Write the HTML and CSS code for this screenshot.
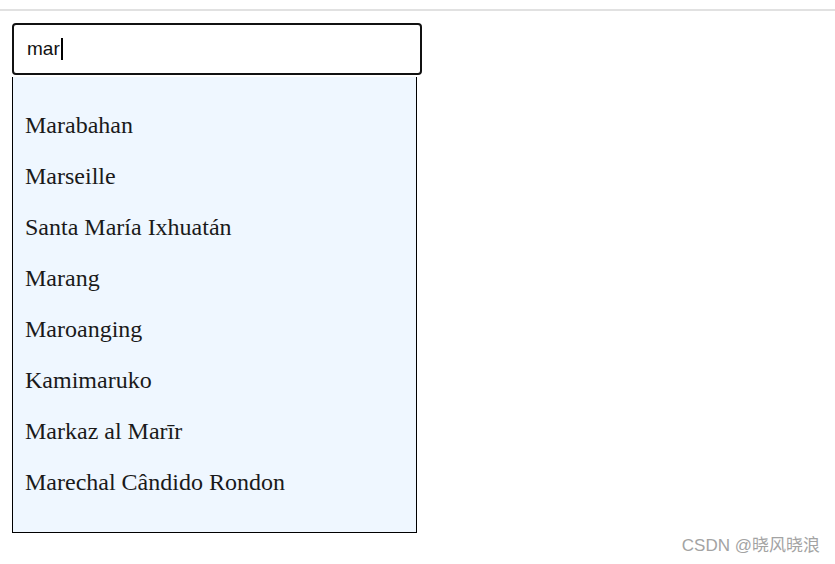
FILE: index.html
```html
<!DOCTYPE html>
<html lang="en">
<head>
<meta charset="utf-8">
<title>Autocomplete</title>
<link rel="stylesheet" href="styles.css">
</head>
<body>
<div class="topline"></div>
<div class="combo">
  <div class="search"><span class="query">mar</span><span class="caret"></span></div>
  <ul class="results">
    <li>Marabahan</li>
    <li>Marseille</li>
    <li>Santa María Ixhuatán</li>
    <li>Marang</li>
    <li>Maroanging</li>
    <li>Kamimaruko</li>
    <li>Markaz al Marīr</li>
    <li>Marechal Cândido Rondon</li>
  </ul>
</div>
<div class="watermark">CSDN @晓风晓浪</div>
</body>
</html>
```
FILE: styles.css
```css
html, body {
  margin: 0;
  padding: 0;
  background: #ffffff;
}
body {
  width: 835px;
  height: 564px;
  position: relative;
  overflow: hidden;
  font-family: "Liberation Serif", "Times New Roman", serif;
}
.topline {
  margin-top: 9px;
  border-top: 2px solid #e1e1e1;
}
.combo {
  margin: 12px 0 0 12px;
  width: 410px;
}
.search {
  box-sizing: border-box;
  height: 52px;
  border: 2px solid #111111;
  border-radius: 4px;
  padding: 0 13px;
  display: flex;
  align-items: center;
  font-family: "Liberation Sans", Arial, sans-serif;
  font-size: 19px;
  color: #111111;
  background: #ffffff;
}
.caret {
  display: inline-block;
  width: 2px;
  height: 22px;
  background: #000000;
  margin-left: 1px;
}
.results {
  box-sizing: border-box;
  list-style: none;
  margin: 2px 0 0 0;
  width: 405px;
  padding: 23px 0 24px 12px;
  border: 1px solid #000000;
  border-top: none;
  background: #eff7ff;
}
.results li {
  font-size: 24px;
  line-height: 27px;
  padding: 12px 0;
  color: #1a1a1a;
}
.watermark {
  position: absolute;
  right: 15px;
  bottom: 8px;
  font-family: "Liberation Sans", "Noto Sans CJK SC", sans-serif;
  font-size: 17px;
  color: #a3a3a3;
}
```
